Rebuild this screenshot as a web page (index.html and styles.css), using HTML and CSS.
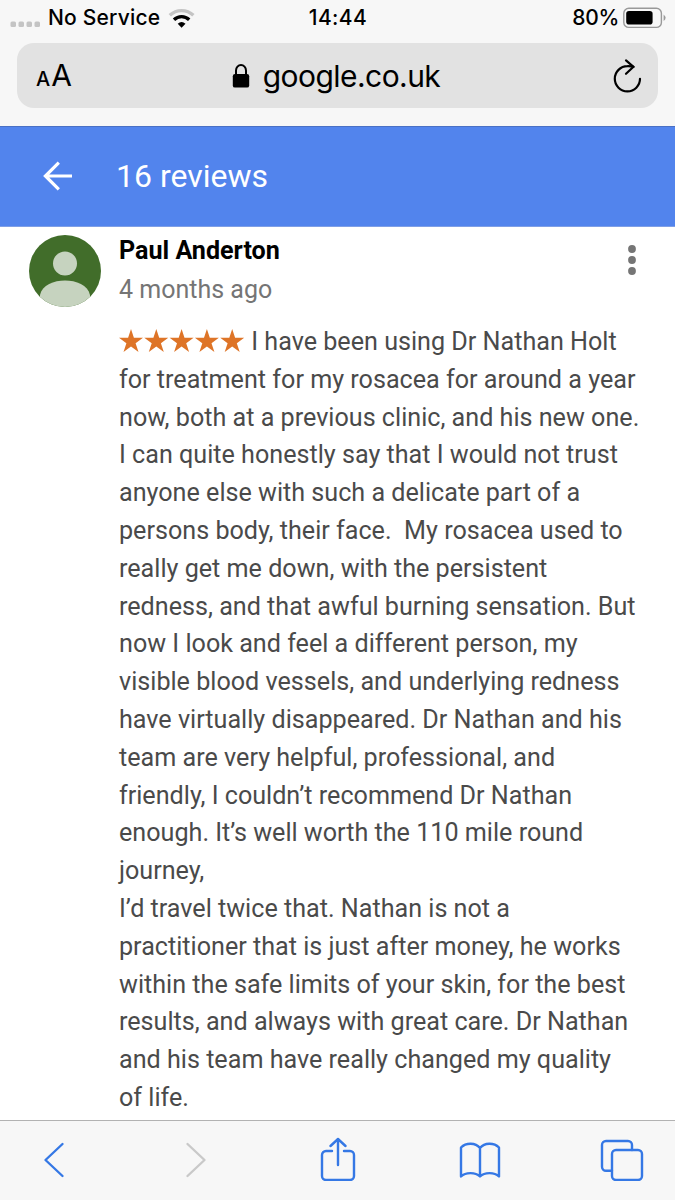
FILE: index.html
```html
<!DOCTYPE html>
<html lang="en">
  <head>
    <meta charset="UTF-8" />
    <meta name="viewport" content="width=device-width, initial-scale=1.0" />
    <title>16 reviews</title>
    <link rel="stylesheet" href="styles.css">
  </head>
  <body>
    <div class="status">
      <div class="carrier">
        <svg class="signal" width="32" height="36" viewBox="0 0 32 36" fill="#c4c4c4">
          <rect x="0.5" y="21.5" width="5.5" height="5.5" rx="1.5" />
          <rect x="8.5" y="21.5" width="5.5" height="5.5" rx="1.5" />
          <rect x="16.5" y="21.5" width="5.5" height="5.5" rx="1.5" />
          <rect x="24.5" y="21.5" width="5.5" height="5.5" rx="1.5" />
        </svg>
        <span class="service">No Service</span>
        <svg class="wifi" width="28" height="36" viewBox="0 0 28 36" fill="none" stroke-width="3.4">
          <path d="M1.8 15.3a17.2 17.2 0 0 1 23.6 0" stroke="#c4c4c4" />
          <path d="M6 19.7a11 11 0 0 1 15.2 0" stroke="#000" />
          <path d="M9.7 23.800q3.9-3.6 7.8 0L13.6 27.800z" fill="#000" />
        </svg>
      </div>
      <span class="clock">14:44</span>
      <div class="power">
        <span>80%</span>
        <svg width="43" height="22" viewBox="0 0 43 22">
          <rect x="0.8" y="1.2" width="37.6" height="19.2" rx="5" fill="none" stroke="#999" stroke-width="1.4" />
          <rect x="3.2" y="4" width="26.4" height="13.6" rx="2.8" />
          <path d="M40.6 7.5q4 3.3 0 6.6z" fill="#999" />
        </svg>
      </div>
    </div>

    <div class="address">
      <span class="text-size"><small>A</small>A</span>
      <div class="url">
        <svg width="18" height="26" viewBox="0 0 18 26">
          <rect x="0.8" y="11" width="16.4" height="13.6" rx="2.2" />
          <path d="M4 12V7.5a5 5.4 0 0 1 10 0V12" fill="none" stroke="#000" stroke-width="2" />
        </svg>
        <span>google.co.uk</span>
      </div>
      <svg class="reload" width="30" height="36" viewBox="0 0 30 36" fill="none" stroke="#000" stroke-width="2.2" stroke-linecap="round" stroke-linejoin="round">
        <path d="M28 20.800A12.600 12.600 0 1 1 15.400 8.200Q18 8 21.500 8.800" />
        <path d="M14 2.400l7.500 6.400-7.500 7" />
      </svg>
    </div>

    <header class="header">
      <svg width="30" height="30" viewBox="0 0 30 30" fill="none" stroke="#fff" stroke-width="3.2">
        <path d="M29 15H3M15.800 1.600L2.400 15l13.400 13.400" />
      </svg>
      <h1>16 reviews</h1>
    </header>

    <main class="review">
      <svg class="avatar" width="72" height="72" viewBox="0 0 72 72">
        <clipPath id="round"><circle cx="36" cy="36" r="36" /></clipPath>
        <g clip-path="url(#round)">
          <rect width="72" height="72" fill="#416d2a" />
          <circle cx="36" cy="28.5" r="12" fill="#c6d3bf" />
          <path d="M11 72V60c2-10 14-14.5 25-14.5S59 50 61 60v12z" fill="#c6d3bf" />
        </g>
      </svg>
      <div class="body">
        <div class="top">
          <div>
            <h2>Paul Anderton</h2>
            <p class="date">4 months ago</p>
          </div>
          <svg class="more" width="8" height="30" viewBox="0 0 8 30" fill="#757575">
            <circle cx="4" cy="4" r="3.9" />
            <circle cx="4" cy="15" r="3.9" />
            <circle cx="4" cy="26" r="3.9" />
          </svg>
        </div>
        <p class="text">
          <svg class="stars" width="126" height="24" viewBox="0 0 126 24" fill="#de7427">
            <defs>
              <path id="star" d="M12 0l2.9 8.8H24l-7.4 5.4 2.9 8.9-7.5-5.5-7.5 5.5 2.9-8.9L0 8.8h9.1z" />
            </defs>
            <use href="#star" />
            <use href="#star" x="25.3" />
            <use href="#star" x="50.6" />
            <use href="#star" x="75.9" />
            <use href="#star" x="101.2" />
          </svg>
          I have been using Dr Nathan Holt<br />
          for treatment for my rosacea for around a year<br />
          now, both at a previous clinic, and his new one.<br />
          I can quite honestly say that I would not trust<br />
          anyone else with such a delicate part of a<br />
          persons body, their face.&nbsp; My rosacea used to<br />
          really get me down, with the persistent<br />
          redness, and that awful burning sensation. But<br />
          now I look and feel a different person, my<br />
          visible blood vessels, and underlying redness<br />
          have virtually disappeared. Dr Nathan and his<br />
          team are very helpful, professional, and<br />
          friendly, I couldn’t recommend Dr Nathan<br />
          enough. It’s well worth the 110 mile round<br />
          journey,<br />
          I’d travel twice that. Nathan is not a<br />
          practitioner that is just after money, he works<br />
          within the safe limits of your skin, for the best<br />
          results, and always with great care. Dr Nathan<br />
          and his team have really changed my quality<br />
          of life.
        </p>
      </div>
    </main>

    <nav class="toolbar">
      <svg viewBox="0 0 22 44">
        <path d="M19.500 7L2.500 23l17 16" />
      </svg>
      <svg class="off" viewBox="0 0 22 44">
        <path d="M2.500 7l17 16-17 16" />
      </svg>
      <svg viewBox="0 0 36 44">
        <path d="M12 14H6a4 4 0 0 0-4 4v21a4 4 0 0 0 4 4h24a4 4 0 0 0 4-4V18a4 4 0 0 0-4-4h-6M18 28V2M10.500 9L18 2l7.500 7" />
      </svg>
      <svg viewBox="0 0 42 44">
        <path d="M21 11v28M21 11C16.500 5.500 7 5.500 2 10.500v29c4.500-4.500 14.500-4.500 19 0 4.500-4.500 14.500-4.500 19 0v-29C35 5.500 25.500 5.500 21 11" />
      </svg>
      <svg viewBox="0 0 44 44">
        <path d="M12 33.800H6a4 4 0 0 1-4-4V8a4 4 0 0 1 4-4h22a4 4 0 0 1 4 4v5" />
        <rect x="12" y="13" width="30" height="30" rx="4" />
      </svg>
    </nav>
  </body>
</html>
```
FILE: styles.css
```css
* {
  box-sizing: border-box;
}
body {
  margin: 0;
  width: 675px;
  height: 1200px;
  display: flex;
  flex-direction: column;
  overflow: hidden;
  background: #f7f7f7;
  font-family: Inter, "Liberation Sans", sans-serif;
  color: #000;
}
svg {
  display: block;
  flex: none;
}
h1,
h2,
p {
  margin: 0;
}
.status {
  display: grid;
  grid-template-columns: 1fr auto 1fr;
  align-items: center;
  height: 36px;
  padding: 0 9px 0 10px;
  font-size: 21px;
  font-weight: 500;
}
.status span {
  margin-top: -1px;
}
.carrier,
.power {
  display: flex;
  align-items: center;
}
.carrier .service {
  margin: -1px 8px 0 6px;
  letter-spacing: 0.2px;
}
.clock {
  letter-spacing: 0.4px;
}
.power {
  justify-content: flex-end;
  gap: 4px;
  letter-spacing: -0.3px;
}
.address {
  display: grid;
  grid-template-columns: 1fr auto 1fr;
  align-items: center;
  height: 65px;
  margin: 7px 17px 18px;
  padding: 0 16px 0 20px;
  border-radius: 17px;
  background: #e2e2e2;
  font-size: 30px;
}
.text-size {
  margin: -2px 0 0 -1px;
}
.text-size small {
  margin-right: 1px;
  font-size: 20px;
  font-weight: 500;
}
.url {
  display: flex;
  align-items: center;
  gap: 13px;
  margin-right: 7px;
  letter-spacing: -0.55px;
}
.reload {
  justify-self: end;
}
.header {
  display: flex;
  align-items: center;
  gap: 43px;
  height: 101px;
  padding: 0 0 2px 43px;
  border-top: 1px solid #4a70c4;
  border-bottom: 1px solid #7f9fe6;
  background: #5284ed;
  color: #fff;
}
.header h1 {
  font: 400 32px Roboto, sans-serif;
}
.review {
  display: flex;
  flex: 1;
  gap: 18px;
  padding: 8px 0 0 29px;
  background: #fff;
  font-family: Roboto, sans-serif;
}
.body {
  flex: 1;
}
.top {
  display: flex;
  justify-content: space-between;
  height: 88px;
  padding-right: 39px;
}
.top h2 {
  padding-top: 1px;
  font-size: 25.1px;
  font-weight: 700;
  line-height: 30px;
}
.date {
  margin-top: 9px;
  font-size: 25px;
  line-height: 30px;
  color: #757575;
}
.more {
  margin-top: 10px;
}
.text {
  font-size: 25.15px;
  line-height: 37.8px;
  white-space: nowrap;
  color: #4a4a4a;
}
.stars {
  display: inline-block;
  vertical-align: -3px;
}
.toolbar {
  display: flex;
  justify-content: space-between;
  height: 80px;
  padding: 16px 31px 0 32px;
  border-top: 1px solid #b2b2b2;
}
.toolbar svg {
  width: 44px;
  height: 44px;
  fill: none;
  stroke: #3578e5;
  stroke-width: 2.4;
  stroke-linecap: round;
  stroke-linejoin: round;
}
.toolbar .off {
  stroke: #c9c9c9;
}
```
